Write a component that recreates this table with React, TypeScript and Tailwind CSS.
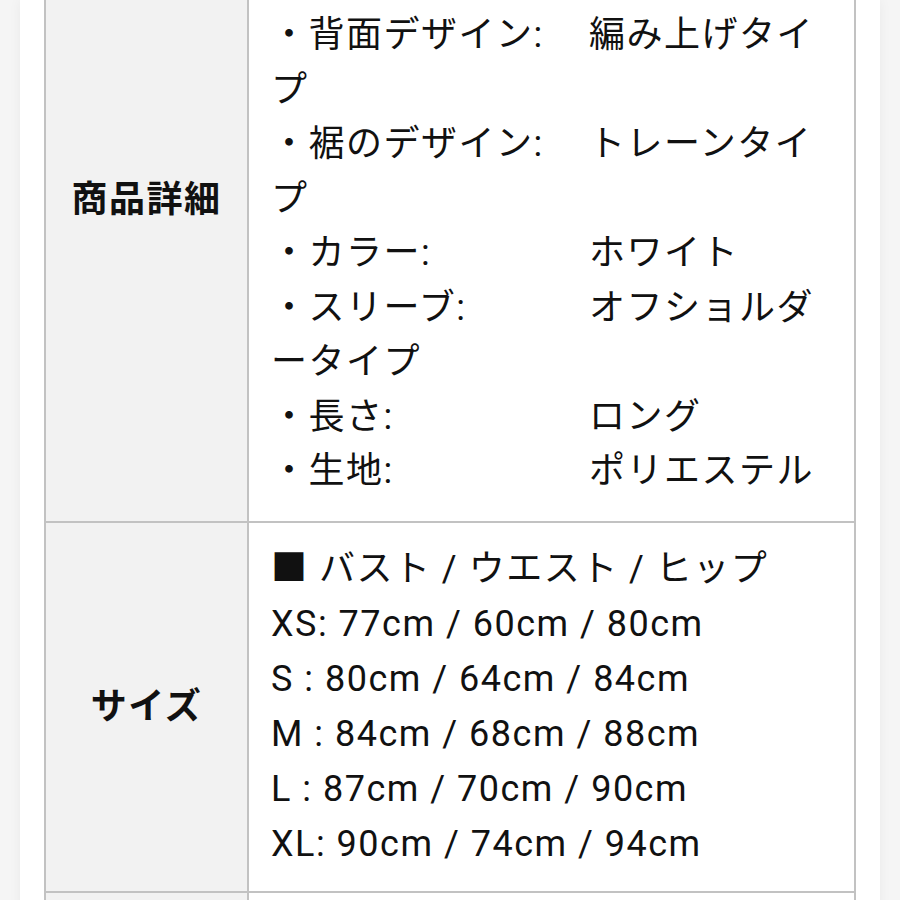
import React from "react";

type Spec = { label: string; value: string };

// first two lines sit above the visible area
const details: Spec[] = [
  { label: "・シルエット:", value: "Aライン" },
  { label: "・ネック:", value: "Vネック" },
  { label: "・背面デザイン:", value: "編み上げタイプ" },
  { label: "・裾のデザイン:", value: "トレーンタイプ" },
  { label: "・カラー:", value: "ホワイト" },
  { label: "・スリーブ:", value: "オフショルダータイプ" },
  { label: "・長さ:", value: "ロング" },
  { label: "・生地:", value: "ポリエステル" },
];

const sizes = [
  "XS: 77cm / 60cm / 80cm",
  "S : 80cm / 64cm / 84cm",
  "M : 84cm / 68cm / 88cm",
  "L : 87cm / 70cm / 90cm",
  "XL: 90cm / 74cm / 94cm",
];

const Label: React.FC<{ children: React.ReactNode }> = ({ children }) => (
  <div className="flex items-center justify-center bg-[#f2f2f2] border-r-2 border-b-2 border-[#c2c2c2] font-bold">
    {children}
  </div>
);

const App: React.FC = () => {
  return (
    <div className="h-screen overflow-hidden bg-[#f5f5f5] font-['Roboto','Noto_Sans_CJK_JP',sans-serif] text-[36px] tracking-[1.5px] text-[#111]">
      <div className="mx-[20px] flex min-h-full flex-col bg-white px-[24px] shadow-[0_0_12px_rgba(0,0,0,0.05)]">
        <div className="-mt-[122px] grid grid-cols-[203px_1fr] border-l-2 border-t-2 border-[#c2c2c2]">
          <Label>商品詳細</Label>
          <div className="border-r-2 border-b-2 border-[#c2c2c2] px-[22px] pt-[19px] pb-[22px] leading-[54.5px]">
            {details.map((d, i) => (
              <div key={i}>
                <span className="inline-block w-[318px]">{d.label}</span>
                {d.value}
              </div>
            ))}
          </div>

          <Label>サイズ</Label>
          <div className="border-r-2 border-b-2 border-[#c2c2c2] px-[22px] py-[19px] leading-[55px]">
            <div>■ バスト / ウエスト / ヒップ</div>
            {sizes.map((s) => (
              <div key={s}>{s}</div>
            ))}
          </div>

          <Label>素材</Label>
          <div className="h-[120px] border-r-2 border-b-2 border-[#c2c2c2]" />
        </div>
      </div>
    </div>
  );
};

export default App;
